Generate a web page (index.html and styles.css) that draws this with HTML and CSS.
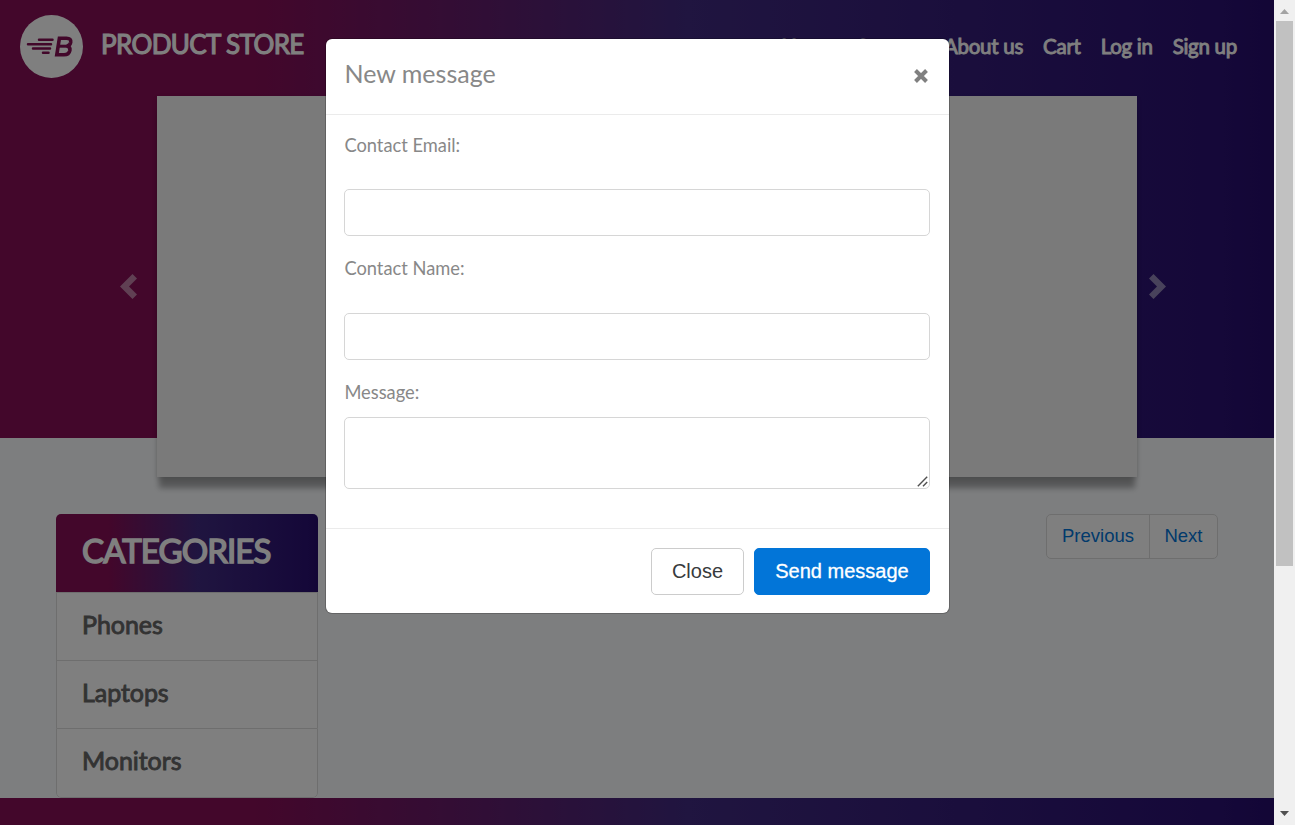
FILE: index.html
```html
<!DOCTYPE html>
<html lang="en">
<head>
<meta charset="utf-8">
<title>Product Store</title>
<link rel="stylesheet" href="styles.css">
</head>
<body>
<div class="page">
  <header class="hero">
    <nav class="navbar">
      <a class="brand">
        <svg class="logo" viewBox="0 0 63 63" width="63" height="63">
          <circle cx="31.5" cy="31.5" r="31.5" fill="#fff"/>
          <g stroke="#840e54" stroke-linecap="round" stroke-width="2.5" fill="none">
            <path d="M19 24.800H32.500M8 29.200H31M13 33.500H30M23 37.800H28.500"/>
          </g>
          <path d="M39.400 23.200H46.500Q51.400 23.300 50.700 27.300Q50 30.600 46.800 31Q50.500 31.800 49.900 35.400Q49 39.800 44 39.800H36.800Z" fill="none" stroke="#840e54" stroke-width="3.600"/>
          <path d="M38 31.200H47" stroke="#840e54" stroke-width="3"/>
        </svg>
        <span class="brand-name">PRODUCT STORE</span>
      </a>
      <div class="links"><a>Home</a><a>Contact</a><a>About us</a><a>Cart</a><a>Log in</a><a>Sign up</a></div>
    </nav>
    <div class="carousel">
      <svg class="arrow arrow-prev" viewBox="0 0 17 25" width="17" height="25"><path d="M12.500 0L17 4.500L9 12.500L17 20.500L12.500 25L0 12.500Z" fill="#fff"/></svg>
      <div class="slide"></div>
      <svg class="arrow arrow-next" viewBox="0 0 17 25" width="17" height="25"><path d="M4.500 0L0 4.500L8 12.500L0 20.500L4.500 25L17 12.500Z" fill="#fff"/></svg>
    </div>
  </header>
  <main class="content">
    <div class="categories">
      <div class="cat-head">CATEGORIES</div>
      <a class="cat">Phones</a>
      <a class="cat">Laptops</a>
      <a class="cat">Monitors</a>
    </div>
    <div class="pager"><a class="prev">Previous</a><a class="next">Next</a></div>
  </main>
  <footer class="footer"></footer>
  <div class="backdrop">
    <section class="modal">
      <div class="modal-head">
        <h5 class="title">New message</h5>
        <svg class="close" viewBox="0 0 16 16" width="16" height="16"><path d="M2.500 2.500L13.500 13.500M13.500 2.500L2.500 13.500" stroke="#808080" stroke-width="4"/></svg>
      </div>
      <div class="modal-body">
        <label class="label">Contact Email:</label>
        <input class="field" type="text">
        <label class="label">Contact Name:</label>
        <input class="field" type="text">
        <label class="label label-message">Message:</label>
        <div class="area">
          <svg viewBox="0 0 11 11" width="11" height="11"><path d="M.8 10.200L10.200 .8M6 10.200L10.200 6" stroke="#505050" stroke-width="1.400"/></svg>
        </div>
      </div>
      <div class="modal-foot">
        <button class="btn">Close</button>
        <button class="btn btn-primary">Send message</button>
      </div>
    </section>
  </div>
</div>
<aside class="scrollbar">
  <svg class="scroll-arrow" viewBox="0 0 9 5" width="9" height="5"><path d="M0 5L4.500 0L9 5Z" fill="#a3a3a3"/></svg>
  <div class="thumb"></div>
  <svg class="scroll-arrow scroll-down" viewBox="0 0 9 5" width="9" height="5"><path d="M0 0L4.500 5L9 0Z" fill="#505050"/></svg>
</aside>
</body>
</html>
```
FILE: styles.css
```css
* { box-sizing: border-box; }
body {
  margin: 0;
  display: flex;
  width: 1295px;
  height: 825px;
  overflow: hidden;
  font-family: Lato, sans-serif;
}
.page {
  position: relative;
  width: 1274px;
  height: 825px;
  display: flex;
  flex-direction: column;
  background: #fbfdff;
  overflow: hidden;
}
.hero, .footer, .cat-head {
  background: linear-gradient(to right, #860e56 0%, #860e56 20%, #402a80 54%, #2a1072 96%, #260c6c 100%);
}
.hero { height: 438px; flex: none; }
.navbar {
  height: 96px;
  display: flex;
  justify-content: space-between;
  padding: 15px 37px 0 20px;
  color: #fff;
}
.brand { display: flex; gap: 18px; align-items: flex-start; }
.logo { display: block; }
.brand-name {
  font-size: 26px;
  line-height: 32px;
  margin-top: 13px;
  letter-spacing: -0.62px;
  -webkit-text-stroke: 1.1px currentColor;
  white-space: nowrap;
}
.links {
  display: flex;
  gap: 20px;
  padding-top: 17px;
  font-size: 20.500px;
  line-height: 28px;
  letter-spacing: -0.27px;
  -webkit-text-stroke: 0.9px currentColor;
  white-space: nowrap;
}
.carousel { display: flex; align-items: center; height: 381px; padding-left: 120px; }
.arrow { flex: none; opacity: .48; }
.arrow-prev { margin-right: 20px; }
.arrow-next { margin-left: 12px; }
.slide {
  width: 980px;
  height: 381px;
  background: #f4f4f4;
  box-shadow: 0 13px 6px -2px rgba(0, 0, 0, .32), 0 2px 5px rgba(0, 0, 0, .12);
}
.content {
  height: 360px;
  flex: none;
  display: flex;
  justify-content: space-between;
  align-items: flex-start;
  padding: 76px 56px 0;
}
.categories {
  width: 262px;
  height: 284px;
  border-radius: 5px;
  background: #fff;
  overflow: hidden;
}
.cat-head {
  height: 78px;
  padding-left: 26px;
  font-size: 33px;
  line-height: 72px;
  color: #fff;
  letter-spacing: -0.9px;
  -webkit-text-stroke: 1.5px currentColor;
}
.cat {
  display: block;
  height: 68px;
  padding-left: 25px;
  border: 1px solid #dcdcdc;
  border-bottom: 0;
  font-size: 25px;
  line-height: 63px;
  color: #666;
  letter-spacing: -0.06px;
  -webkit-text-stroke: 0.9px currentColor;
}
.cat:last-child { height: 70px; border-bottom: 1px solid #dcdcdc; border-radius: 0 0 5px 5px; }
.pager {
  display: flex;
  width: 172px;
  height: 45px;
  border: 1px solid #dcdcdc;
  border-radius: 5px;
  background: #fff;
  font: 18.500px/42px "Liberation Sans", Arial, sans-serif;
  color: #0275d8;
  text-align: center;
}
.prev { width: 103px; border-right: 1px solid #dcdcdc; }
.next { flex: 1; }
.footer { height: 27px; flex: none; }
.backdrop {
  position: absolute;
  inset: 0;
  padding: 39px 0 0 326px;
  background: rgba(0, 0, 0, .5);
}
.modal {
  width: 623px;
  height: 574px;
  border-radius: 6px;
  background: #fff;
  box-shadow: 0 0 0 1px rgba(0, 0, 0, .2);
}
.modal-head {
  height: 76px;
  display: flex;
  justify-content: space-between;
  padding: 17px 20px 0 18.500px;
  border-bottom: 1px solid #ebebeb;
}
.title { margin: 0; font-size: 25px; font-weight: 400; line-height: 35px; color: #888; }
.close { margin-top: 12px; }
.modal-body {
  height: 413px;
  display: flex;
  flex-direction: column;
  padding: 17px 19px 0 18px;
}
.label { font-size: 18.300px; line-height: 26px; height: 57px; padding-left: 0.400px; color: #888; }
.label:not(:first-child) { line-height: 24px; }
.label-message { height: 37px; }
.field {
  height: 47px;
  width: 100%;
  margin: 0 0 20px;
  border: 1px solid #d6d6d6;
  border-radius: 5px;
}
.area {
  height: 72px;
  display: flex;
  align-items: flex-end;
  justify-content: flex-end;
  padding: 1px;
  border: 1px solid #d6d6d6;
  border-radius: 5px;
}
.modal-foot {
  height: 85px;
  display: flex;
  justify-content: flex-end;
  gap: 10px;
  padding: 19px 19px 0;
  border-top: 1px solid #ebebeb;
}
.btn {
  width: 93px;
  height: 47px;
  padding: 0;
  border: 1px solid #ccc;
  border-radius: 5px;
  background: #fff;
  color: #373a3c;
  font: 20px "Liberation Sans", Arial, sans-serif;
  white-space: nowrap;
}
.btn-primary {
  width: 176px;
  border-color: #0275d8;
  background: #0275d8;
  color: #fff;
  -webkit-text-stroke: 0.3px currentColor;
}
.scrollbar {
  width: 21px;
  height: 825px;
  display: flex;
  flex-direction: column;
  align-items: center;
  padding: 9px 0 9px;
  background: #f0f0f0;
}
.scroll-arrow { display: block; flex: none; }
.scroll-down { margin-top: auto; }
.thumb { width: 17px; height: 545px; margin-top: 7px; background: #c1c1c1; }
```
